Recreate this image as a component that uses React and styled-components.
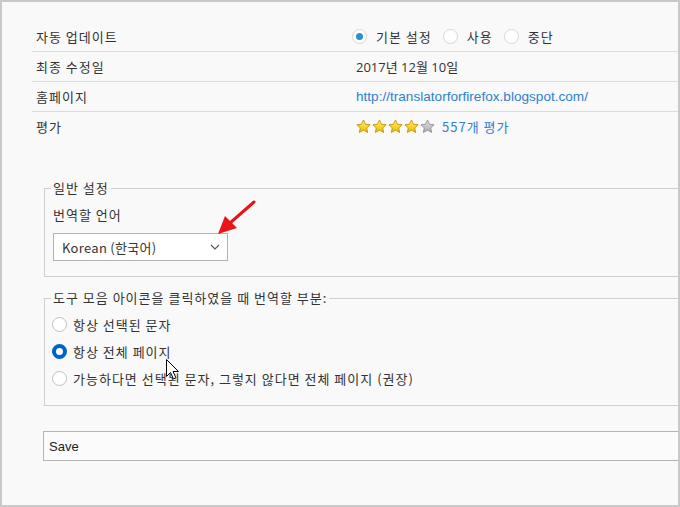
import React from "react";
import styled, { createGlobalStyle } from "styled-components";

const Global = createGlobalStyle`
  html, body { margin: 0; padding: 0; background: #f9f9f9; }
  body {
    font-family: "Noto Sans CJK KR", "Noto Sans", sans-serif;
    font-size: 13px;
    letter-spacing: 1px;
    color: #333;
  }
`;

const Frame = styled.div`
  box-sizing: border-box;
  width: 680px;
  height: 507px;
  border: 2px solid #c9c9c9;
  background: #f9f9f9;
  overflow: hidden;
  position: relative;
  padding-top: 20px;
`;

const Details = styled.div`
  margin-left: 30px;
`;

const Row = styled.div`
  display: grid;
  grid-template-columns: 320px 1fr;
  align-items: center;
  height: 29px;
  border-bottom: ${(p) => (p.$last ? "none" : "1px solid #dcdcdc")};
`;

const Label = styled.div`
  padding-left: 4px;
  line-height: 18px;
`;

const Value = styled.div`
  display: flex;
  align-items: center;
  padding-left: ${(p) => p.$pad ?? 4}px;
  line-height: 18px;
`;

const Plain = styled.span`
  font-family: "Open Sans", "Noto Sans CJK KR", sans-serif;
  letter-spacing: 0;
`;

const Link = styled.a`
  color: #2f80cf;
  text-decoration: none;
  font-family: ${(p) => (p.$latin ? '"Liberation Sans", Arial, sans-serif' : "inherit")};
  letter-spacing: ${(p) => (p.$latin ? "0" : "1px")};
  font-size: ${(p) => (p.$latin ? "13.6px" : "13px")};
`;

const RadioChoice = styled.label`
  display: flex;
  align-items: center;
  gap: 9px;
  margin-right: 11px;
`;

const Dot = styled.span`
  box-sizing: border-box;
  width: 15px;
  height: 15px;
  border-radius: 50%;
  background: #fff;
  border: 1px solid #d6d6d6;
  display: flex;
  align-items: center;
  justify-content: center;
  &::after {
    content: "";
    width: 7px;
    height: 7px;
    border-radius: 50%;
    background: ${(p) => (p.$on ? "#2c8fd6" : "transparent")};
  }
`;

const Stars = styled.div`
  display: flex;
  gap: 1px;
  margin-right: 7px;
`;

const Box = styled.fieldset`
  box-sizing: border-box;
  margin: ${(p) => p.$top}px 0 0 42px;
  padding: 0 0 ${(p) => p.$bottom}px 6px;
  border: 1px solid #cfcfcf;
  border-right: none;
  min-width: 0;
`;

const Legend = styled.legend`
  padding: 0 2px;
  line-height: 18px;
`;

const FieldLabel = styled.div`
  margin: 9px 0 0 2px;
  line-height: 18px;
`;

const Select = styled.div`
  box-sizing: border-box;
  margin: 9px 0 0 2px;
  width: 175px;
  height: 28px;
  background: #fff;
  border: 1px solid #b3b3b3;
  display: flex;
  align-items: center;
  justify-content: space-between;
  padding: 0 7px 0 8px;
  letter-spacing: 0.3px;
`;

const Options = styled.div`
  padding-top: 4px;
`;

const Option = styled.label`
  display: flex;
  align-items: center;
  gap: 6px;
  height: 27px;
  padding-left: 1px;
`;

const WinRadio = styled.span`
  box-sizing: border-box;
  width: 15px;
  height: 15px;
  border-radius: 50%;
  background: #fff;
  border: ${(p) => (p.$on ? "4px solid #0063c6" : "1px solid #c2c2c2")};
`;

const SaveButton = styled.button`
  display: block;
  box-sizing: border-box;
  margin: 25px 0 0 41px;
  width: 660px;
  height: 30px;
  background: #fbfbfb;
  border: 1px solid #b5b5b5;
  text-align: left;
  padding: 0 0 0 5px;
  font-family: "Liberation Sans", Arial, sans-serif;
  font-size: 13px;
  letter-spacing: 0;
  color: #222;
`;

const Overlay = styled.svg`
  position: absolute;
  left: ${(p) => p.$x}px;
  top: ${(p) => p.$y}px;
  pointer-events: none;
`;

function Star({ on }) {
  const id = on ? "gold" : "grey";
  return (
    <svg width="15" height="15" viewBox="0 0 24 24">
      <defs>
        <linearGradient id="gold" x1="0" y1="0" x2="0" y2="1">
          <stop offset="0" stopColor="#fff36a" />
          <stop offset="1" stopColor="#f0b800" />
        </linearGradient>
        <linearGradient id="grey" x1="0" y1="0" x2="0" y2="1">
          <stop offset="0" stopColor="#e6e6e6" />
          <stop offset="1" stopColor="#a9a9a9" />
        </linearGradient>
      </defs>
      <path
        d="M12 1.5l3.2 6.9 7.4.8-5.5 5 1.6 7.4L12 17.8l-6.7 3.8 1.6-7.4-5.5-5 7.4-.8z"
        fill={`url(#${id})`}
        stroke={on ? "#b88a00" : "#8a8a8a"}
        strokeWidth="1.3"
        strokeLinejoin="round"
      />
    </svg>
  );
}

export default function App() {
  return (
    <>
      <Global />
      <Frame>
        <Details>
          <Row>
            <Label>자동 업데이트</Label>
            <Value $pad={0}>
              <RadioChoice>
                <Dot $on />
                기본 설정
              </RadioChoice>
              <RadioChoice>
                <Dot />
                사용
              </RadioChoice>
              <RadioChoice>
                <Dot />
                중단
              </RadioChoice>
            </Value>
          </Row>
          <Row>
            <Label>최종 수정일</Label>
            <Value>
              <Plain>2017년 12월 10일</Plain>
            </Value>
          </Row>
          <Row>
            <Label>홈페이지</Label>
            <Value>
              <Link href="#" $latin>
                http://translatorforfirefox.blogspot.com/
              </Link>
            </Value>
          </Row>
          <Row $last>
            <Label>평가</Label>
            <Value>
              <Stars>
                <Star on />
                <Star on />
                <Star on />
                <Star on />
                <Star />
              </Stars>
              <Link href="#">557개 평가</Link>
            </Value>
          </Row>
        </Details>

        <Box $top={38} $bottom={15}>
          <Legend>일반 설정</Legend>
          <FieldLabel>번역할 언어</FieldLabel>
          <Select>
            <span>Korean (한국어)</span>
            <svg width="10" height="6" viewBox="0 0 10 6">
              <path d="M1 1l4 4 4-4" fill="none" stroke="#555" strokeWidth="1.1" />
            </svg>
          </Select>
        </Box>

        <Box $top={12} $bottom={13}>
          <Legend>도구 모음 아이콘을 클릭하였을 때 번역할 부분:</Legend>
          <Options>
            <Option>
              <WinRadio />
              항상 선택된 문자
            </Option>
            <Option>
              <WinRadio $on />
              항상 전체 페이지
            </Option>
            <Option>
              <WinRadio />
              가능하다면 선택된 문자, 그렇지 않다면 전체 페이지 (권장)
            </Option>
          </Options>
        </Box>

        <SaveButton>Save</SaveButton>

        <Overlay $x={210} $y={196} width="48" height="42" viewBox="0 0 48 42">
          <line x1="42" y1="4" x2="18" y2="25" stroke="#e8141b" strokeWidth="3" strokeLinecap="round" />
          <polygon points="6,36 13,18 25,30" fill="#e8141b" />
        </Overlay>

        <Overlay $x={163} $y={356} width="16" height="24" viewBox="0 0 16 24">
          <path
            d="M1.5 1.5v17l4-4 3 6.5 2.5-1.2-3-6.3h5.5z"
            fill="#fff"
            stroke="#000"
            strokeWidth="1"
            strokeLinejoin="miter"
          />
        </Overlay>
      </Frame>
    </>
  );
}
